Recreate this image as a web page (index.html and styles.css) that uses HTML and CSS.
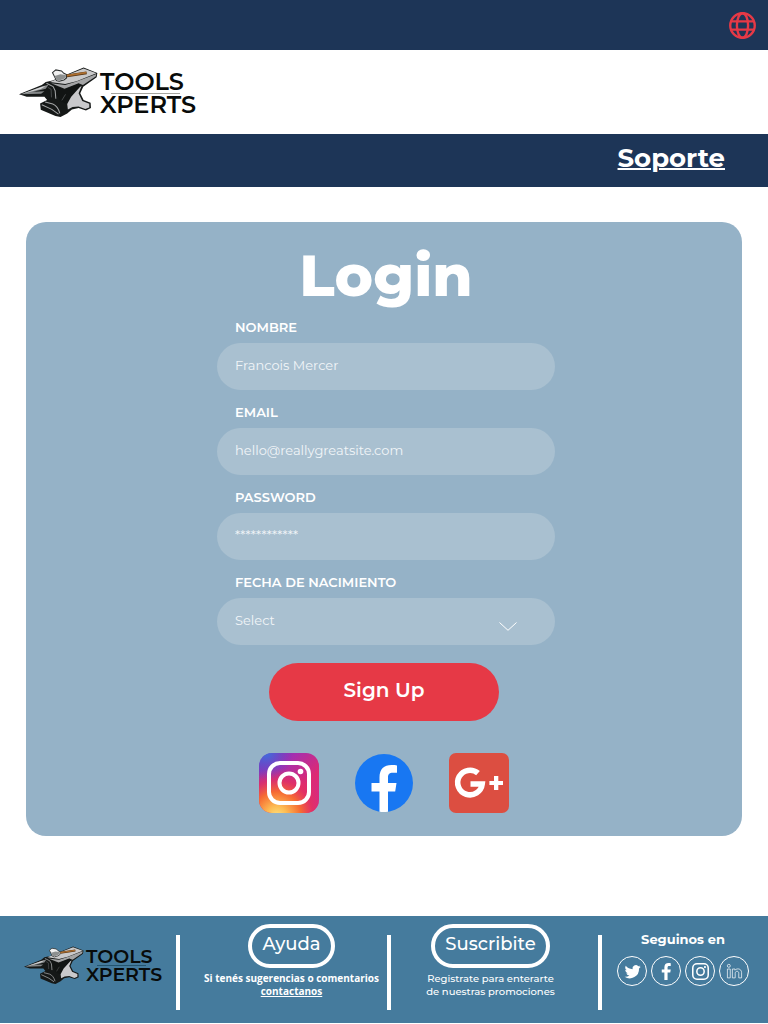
FILE: index.html
```html
<!DOCTYPE html>
<html lang="es">
<head>
<meta charset="utf-8">
<meta name="viewport" content="width=device-width, initial-scale=1">
<title>Tools Xperts - Login</title>
<link rel="stylesheet" href="styles.css">
</head>
<body>
<svg class="sprite" aria-hidden="true">
  <symbol id="anvil" viewBox="12 18 236 152">
    <path fill="#151817" d="M12 101 L80 73 L92 64 L112 60 L205 21 L246 37 L244 50 L204 78 L195 98 L205 118 L226 126 L227 142 L212 149 L190 142 L170 146 L156 158 L136 169 L121 166 L77 147 L75 128 L96 118 L88 108 L35 108 Z"/>
    <path fill="#c9c9ca" d="M104 64 L205 24 L243 38 L184 62 L150 70 Z"/>
    <path fill="#a3a4a5" d="M184 63 L243 40 L241 48 L203 73 L190 68 L148 84 L108 68 L150 73 Z"/>
    <path fill="#111413" d="M106 72 L148 87 L190 69 L196 76 L165 110 L153 130 L135 120 L120 90 Z"/>
    <path fill="#c9c9cb" d="M194 79 L199 76 L190 98 L201 121 L222 129 L222 140 L210 145 L190 137 L172 139 L158 146 L156 130 L168 108 Z"/>
    <path fill="#838687" d="M17 101 L82 77 L100 72 L92 84 L54 93 L88 92 L78 99 Z"/>
    <path fill="#d6d7d8" d="M20 100 L79 79 L92 76 L77 85 Z"/>
    <path fill="none" stroke="#a5a7a8" stroke-width="3" d="M94 68 L114 78 L120 90 L122 114 M80 132 L110 146 L130 160 M90 124 L113 130 Q128 136 134 158"/>
    <path fill="none" stroke="#606364" stroke-width="2" d="M98 80 L108 86 L109 110 M151 101 L140 119"/>
    <path fill="#f1f1f1" stroke="#2b2e2e" stroke-width="3" d="M112 36 L122 28 L139 31 L146 38 L154 42 L154 52 L146 58 L132 62 L124 60 Z"/>
    <path fill="#8d9090" d="M118 46 L136 41 L152 43 L152 51 L144 56 L132 60 L125 58 Z"/>
    <path fill="none" stroke="#543414" stroke-width="8" d="M155 46 L214 37"/>
    <path fill="none" stroke="#ad6f30" stroke-width="5" d="M155 45 L213 36"/>
  </symbol>
  <symbol id="camera" viewBox="0 0 44 44">
    <rect x="2" y="2" width="40" height="40" rx="11" fill="none" stroke="currentColor" stroke-width="4"/>
    <circle cx="22" cy="22" r="9.5" fill="none" stroke="currentColor" stroke-width="4"/>
    <circle cx="33.5" cy="10.5" r="2.8" fill="currentColor"/>
  </symbol>
</svg>

<div class="topbar">
  <button class="language" type="button" aria-label="Idioma">
    <svg viewBox="0 0 26 26" fill="none" stroke="currentColor" stroke-width="2.3"><circle cx="13" cy="13" r="11.8"/><ellipse cx="13" cy="13" rx="5.4" ry="11.8"/><path d="M2 9h22M2 17h22"/></svg>
  </button>
</div>
<header class="header">
  <a class="logo" href="#" aria-label="Tools Xperts">
    <svg class="logo-mark"><use href="#anvil"/></svg>
    <span class="logo-text"><span>TOOLS</span><span class="logo-rule"></span><span>XPERTS</span></span>
  </a>
</header>
<nav class="nav"><a class="nav-link" href="#">Soporte</a></nav>

<main class="main">
  <section class="card">
    <h1 class="title">Login</h1>
    <form class="form">
      <div class="field">
        <label class="label" for="nombre">NOMBRE</label>
        <input class="control" id="nombre" type="text" placeholder="Francois Mercer">
      </div>
      <div class="field">
        <label class="label" for="email">EMAIL</label>
        <input class="control" id="email" type="email" placeholder="hello@reallygreatsite.com">
      </div>
      <div class="field">
        <label class="label" for="password">PASSWORD</label>
        <input class="control" id="password" type="password" placeholder="************">
      </div>
      <div class="field">
        <label class="label" for="fecha">FECHA DE NACIMIENTO</label>
        <div class="select-wrap">
          <select class="control" id="fecha"><option>Select</option></select>
          <svg class="chevron" viewBox="0 0 18 9" fill="none" stroke="currentColor"><path d="M.5.5 9 8.3 17.5.5"/></svg>
        </div>
      </div>
      <button class="submit" type="submit">Sign Up</button>
    </form>
    <div class="providers">
      <a class="provider" href="#" aria-label="Instagram">
        <svg viewBox="0 0 60 60">
          <defs>
            <linearGradient id="ig-base" x1="0" y1="0" x2="1" y2="1"><stop offset="0" stop-color="#6f3fc0"/><stop offset=".3" stop-color="#a42fb0"/><stop offset=".65" stop-color="#dd2a73"/><stop offset="1" stop-color="#d22a8c"/></linearGradient>
            <radialGradient id="ig-warm" cx=".3" cy="1.05" r=".8"><stop offset="0" stop-color="#ffdf7c"/><stop offset=".2" stop-color="#fdbd54"/><stop offset=".5" stop-color="#f66b32"/><stop offset=".75" stop-color="#e5305f" stop-opacity=".8"/><stop offset="1" stop-color="#e5305f" stop-opacity="0"/></radialGradient>
            <radialGradient id="ig-cool" cx=".12" cy="0" r=".45"><stop offset="0" stop-color="#3e70df"/><stop offset="1" stop-color="#5e43c9" stop-opacity="0"/></radialGradient>
          </defs>
          <rect width="60" height="60" rx="13" fill="url(#ig-base)"/><rect width="60" height="60" rx="13" fill="url(#ig-warm)"/><rect width="60" height="60" rx="13" fill="url(#ig-cool)"/>
          <use href="#camera" x="8" y="8" width="44" height="44"/>
        </svg>
      </a>
      <a class="provider" href="#" aria-label="Facebook">
        <svg viewBox="0 0 60 60"><circle cx="30" cy="30" r="29" fill="#1877f2"/><path fill="#fff" d="M25.500 58.700V38.500H17.500V30h8v-5.500c0-8.500 4.500-12.500 12-12.500 2.300 0 4.300.2 5.500.4v7.300h-4c-4 0-5 2-5 4.800V30h8.500l-1.300 8.500h-7.200v20.200a30 30 0 0 1-8.500 0z"/></svg>
      </a>
      <a class="provider" href="#" aria-label="Google Plus">
        <svg viewBox="0 0 60 60"><rect width="60" height="60" rx="7" fill="#dc4e41"/><path d="M29 20.200A12.300 12.300 0 1 0 33.200 31H21.500" fill="none" stroke="#fff" stroke-width="5.600"/><path fill="#fff" d="M45 23h4.300v5H54v4h-4.700v5H45v-5h-4.600v-4H45z"/></svg>
      </a>
    </div>
  </section>
</main>

<footer class="footer">
  <div class="footer-brand">
    <a class="logo logo-small" href="#" aria-label="Tools Xperts">
      <svg class="logo-mark"><use href="#anvil"/></svg>
      <span class="logo-text"><span>TOOLS</span><span class="logo-rule"></span><span>XPERTS</span></span>
    </a>
  </div>
  <div class="divider"></div>
  <div class="footer-block help">
    <button class="pill" type="button">Ayuda</button>
    <p class="note note-bold">Si tenés sugerencias o comentarios<br><a href="#">contactanos</a></p>
  </div>
  <div class="divider"></div>
  <div class="footer-block subscribe">
    <button class="pill" type="button">Suscribite</button>
    <p class="note">Registrate para enterarte<br>de nuestras promociones</p>
  </div>
  <div class="divider"></div>
  <div class="footer-block follow">
    <h2 class="follow-title">Seguinos en</h2>
    <div class="socials">
      <a class="social" href="#" aria-label="Twitter"><svg viewBox="0 0 24 24" fill="currentColor"><path d="M23.600 5.200c-.9.400-1.700.6-2.600.7.900-.6 1.600-1.400 2-2.500-.9.500-1.800.9-2.900 1.100a4.700 4.700 0 0 0-8 4.300A13.200 13.200 0 0 1 2.500 4a4.700 4.700 0 0 0 1.400 6.200c-.7 0-1.400-.2-2.100-.6 0 2.300 1.600 4.200 3.700 4.700-.7.200-1.400.2-2.100.1.600 1.900 2.300 3.200 4.300 3.200A9.400 9.400 0 0 1 .8 19.500 13.200 13.200 0 0 0 21.200 7.700c.9-.7 1.700-1.500 2.400-2.500z"/></svg></a>
      <a class="social" href="#" aria-label="Facebook"><svg viewBox="0 0 24 24" fill="currentColor"><path d="M9 24V13.300H5.300V9.300H9V6c0-4 2.200-6 5.800-6 1.500 0 2.700.1 3.200.2v3.900h-2.200c-1.800 0-2.300.9-2.300 2.300v2.900H18l-.7 4h-3.800V24z"/></svg></a>
      <a class="social" href="#" aria-label="Instagram"><svg viewBox="0 0 44 44"><use href="#camera"/></svg></a>
      <a class="social" href="#" aria-label="LinkedIn"><svg viewBox="0 0 24 24" fill="none" stroke="currentColor" stroke-width="1"><circle cx="4" cy="4" r="2.100"/><path d="M2 8.500h4V21H2zM9 8.500h3.800v1.700c2-3 9.200-2.800 9.200 3.500V21h-4v-6.500c0-4-5-3.500-5 0V21H9z"/></svg></a>
    </div>
  </div>
</footer>
</body>
</html>
```

FILE: styles.css
```css
* { box-sizing: border-box; }
body {
  margin: 0;
  background: #fff;
  color: #fff;
  font-family: Montserrat, Inter, sans-serif;
}
button, input, select { font: inherit; color: inherit; }
a { color: inherit; }
svg { display: block; }
.sprite { position: absolute; width: 0; height: 0; }

.topbar {
  display: flex;
  align-items: center;
  justify-content: flex-end;
  height: 50px;
  padding: 0 12px;
  background: #1d3557;
}
.language {
  width: 27px;
  padding: 0;
  border: 0;
  background: none;
  color: #e63946;
}
.header { padding: 16px 19px; }
.logo {
  display: flex;
  align-items: flex-start;
  gap: 2px;
  color: #080b0a;
  text-decoration: none;
  font-size: 24px;
  font-weight: 600;
  line-height: 22px;
}
.logo-mark { flex: none; width: 79px; height: 52px; }
.logo-text { display: flex; flex-direction: column; padding-top: 5px; }
.logo-rule { height: 1px; margin: 0 16px 0 11px; background: #a5a5a0; }
.logo-small { font-size: 19px; line-height: 17px; }
.logo-small .logo-mark { width: 60px; height: 40px; }
.logo-small .logo-text { padding-top: 3px; }
.logo-small .logo-rule { background: #24556f; }

.nav {
  display: flex;
  justify-content: flex-end;
  padding: 8px 43px 13px;
  background: #1d3557;
}
.nav-link {
  font-size: 26px;
  font-weight: 700;
  line-height: 32px;
  text-decoration-thickness: 2px;
}

.main { padding: 35px 26px 80px; }
.card {
  display: flex;
  flex-direction: column;
  align-items: center;
  padding: 18px 20px 23px;
  border-radius: 20px;
  background: #95b2c7;
}
.title {
  margin: 0;
  padding-left: 4px;
  font-size: 58px;
  font-weight: 800;
  line-height: 72px;
}
.form {
  display: flex;
  flex-direction: column;
  align-items: center;
  gap: 15px;
  width: 100%;
  max-width: 342px;
  margin-top: 8px;
}
.field { width: 100%; padding-left: 4px; }
.label {
  display: block;
  margin-bottom: 8px;
  padding-left: 18px;
  font-size: 13px;
  font-weight: 600;
  line-height: 15px;
}
.control {
  display: block;
  width: 100%;
  height: 47px;
  padding: 0 18px 4px;
  border: 0;
  border-radius: 24px;
  background: #a9c0d0;
  color: #f1f5f8;
  font-size: 13px;
  appearance: none;
}
.control::placeholder { color: #f1f5f8; opacity: 1; }
.select-wrap { position: relative; }
.chevron {
  position: absolute;
  top: 24px;
  right: 38px;
  width: 18px;
  height: 9px;
  pointer-events: none;
}
.submit {
  width: 230px;
  height: 58px;
  margin-top: 3px;
  padding: 0 0 4px;
  border: 0;
  border-radius: 29px;
  background: #e63946;
  font-size: 20px;
  font-weight: 600;
}
.providers { display: flex; gap: 35px; margin-top: 32px; }
.provider { width: 60px; }

.footer {
  display: grid;
  grid-template-columns: 176fr 4px 207fr 4px 207fr 4px 166fr;
  padding: 8px 0 13px;
  background: #457b9d;
}
.footer-brand { padding: 21px 0 0 24px; }
.divider { height: 75px; margin-top: 11px; background: #fff; }
.footer-block { display: flex; flex-direction: column; align-items: center; }
.help { padding-left: 16px; }
.subscribe { padding-right: 8px; }
.follow { padding-right: 4px; }
.pill {
  height: 44px;
  padding: 0 10px 4px;
  border: 4px solid #fff;
  border-radius: 22px;
  background: none;
  font-size: 18px;
  font-weight: 500;
}
.note {
  margin: 4px 0 0;
  font-size: 10px;
  font-weight: 500;
  line-height: 13px;
  text-align: center;
  white-space: nowrap;
}
.note-bold { font-family: "Open Sans", sans-serif; font-weight: 700; }
.follow-title {
  margin: 7px 0 0;
  font-size: 13px;
  font-weight: 700;
  line-height: 16px;
}
.socials { display: flex; gap: 4px; margin-top: 9px; }
.social {
  display: grid;
  place-items: center;
  width: 30px;
  height: 30px;
  border: 1px solid #fff;
  border-radius: 50%;
}
.social svg { width: 17px; height: 17px; }
```
